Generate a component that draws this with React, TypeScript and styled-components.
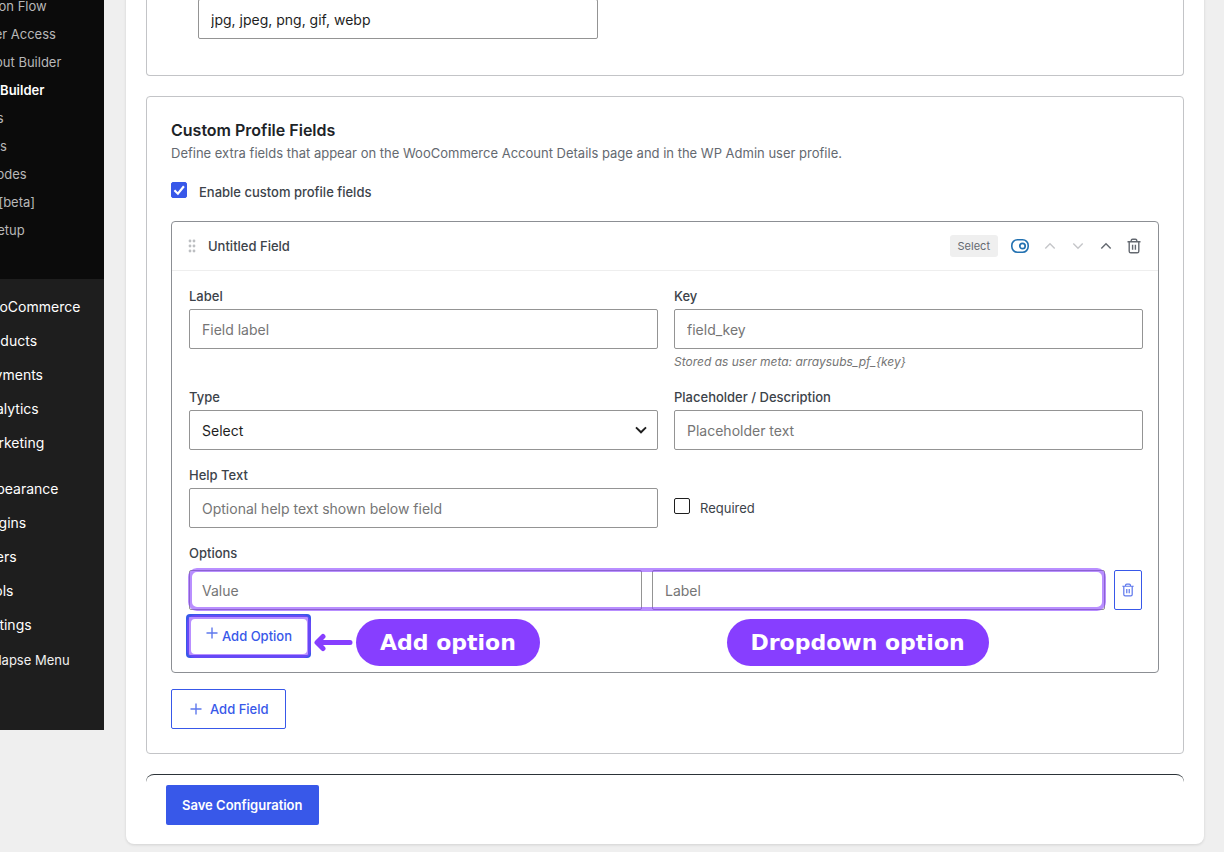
import React, { useState } from "react";
import styled, { createGlobalStyle } from "styled-components";

const BLUE = "#3858e9";
const PURPLE = "#873eff";

const Global = createGlobalStyle`
  *, *::before, *::after { box-sizing: border-box; }
  body {
    margin: 0;
    background: #efefef;
    color: #3c434a;
    font: 400 13px/20px Inter, "Liberation Sans", sans-serif;
    overflow: hidden;
  }
  button, input, select { font-family: inherit; }
`;

const Page = styled.div`
  display: flex;
  align-items: flex-start;
  margin-top: -8px;
`;

const Sidebar = styled.nav`
  flex: none;
  width: 160px;
  margin-left: -56px;
  padding-bottom: 53px;
  background: #1e1e1e;
  overflow: hidden;
`;

const MenuList = styled.ul<{ $sub?: boolean }>`
  list-style: none;
  margin: 0;
  padding: ${(p) => (p.$sub ? "0 0 35px" : "11px 0 1px")};
  background: ${(p) => (p.$sub ? "#0b0b0b" : "transparent")};
`;

const SubLink = styled.a<{ $current?: boolean }>`
  display: block;
  padding-left: 12px;
  font-size: 13px;
  line-height: 28px;
  font-weight: ${(p) => (p.$current ? 600 : 400)};
  color: ${(p) => (p.$current ? "#fff" : "#b8b8b8")};
  text-decoration: none;
  white-space: nowrap;
`;

const MenuLink = styled.a<{ $small?: boolean }>`
  display: block;
  padding-left: 34px;
  font-size: ${(p) => (p.$small ? 13 : 14)}px;
  line-height: 34px;
  font-weight: 400;
  color: ${(p) => (p.$small ? "#f0f0f0" : "#fff")};
  text-decoration: none;
  white-space: nowrap;
`;

const Main = styled.main`
  flex: 1;
  min-width: 0;
  margin: 0 20px 20px 22px;
  padding: 0 20px 19px;
  background: #fff;
  border-radius: 0 0 8px 8px;
  box-shadow: 0 1px 3px rgba(0, 0, 0, 0.12);
`;

const Panel = styled.section<{ $continued?: boolean }>`
  margin-bottom: 20px;
  padding: ${(p) => (p.$continued ? "7px 51px 36px" : "23px 24px 24px")};
  border: 1px solid #c3c4c7;
  border-top-width: ${(p) => (p.$continued ? 0 : 1)}px;
  border-radius: ${(p) => (p.$continued ? "0 0 4px 4px" : "4px")};
`;

const Title = styled.h2`
  margin: 0;
  font-size: 16px;
  line-height: 20px;
  font-weight: 600;
  color: #1d2327;
`;

const Description = styled.p`
  margin: 3px 0 19px;
  color: #646970;
`;

const CheckLabel = styled.label<{ $inGrid?: boolean }>`
  display: flex;
  align-items: flex-start;
  gap: ${(p) => (p.$inGrid ? 10 : 12)}px;
  padding-top: ${(p) => (p.$inGrid ? 32 : 0)}px;
  font-weight: ${(p) => (p.$inGrid ? 400 : 500)};
`;

const CheckBox = styled.span`
  display: grid;
  width: 16px;
  height: 16px;
  & > * { grid-area: 1 / 1; }
  & > svg { pointer-events: none; }
`;

const CheckInput = styled.input`
  appearance: none;
  width: 16px;
  height: 16px;
  margin: 0;
  border: 1px solid #1e1e1e;
  border-radius: 2px;
  background: #fff;
  &:checked { background: ${BLUE}; border-color: ${BLUE}; }
`;

const FieldCard = styled.article`
  margin: 19px 0 16px;
  border: 1px solid #8c8f94;
  border-radius: 4px;
`;

const FieldHeader = styled.header`
  display: flex;
  align-items: center;
  height: 49px;
  padding: 0 10px 0 16px;
  border-bottom: 1px solid #eee;
`;

const FieldName = styled.span`
  flex: 1;
  margin-left: 12px;
  font-weight: 500;
`;

const TypeBadge = styled.span`
  margin-right: 8px;
  padding: 0 8px;
  border-radius: 3px;
  background: #efefef;
  color: #646970;
  font-size: 11px;
  line-height: 22px;
`;

const IconButton = styled.button`
  display: grid;
  place-items: center;
  width: 28px;
  height: 28px;
  padding: 0;
  border: 0;
  background: none;
  color: #646970;
  &:disabled { color: #c5c6c9; }
`;

const ToggleButton = styled(IconButton)`
  margin-right: 2px;
`;

const FieldBody = styled.div`
  display: grid;
  grid-template-columns: 1fr 1fr;
  gap: 16px;
  padding: 16px 15px 16px 17px;
`;

const Field = styled.div`
  min-width: 0;
`;

const Label = styled.label`
  display: block;
  margin-bottom: 4px;
  font-weight: 500;
  line-height: 18px;
`;

const TextInput = styled.input<{ $limited?: boolean }>`
  display: block;
  width: 100%;
  max-width: ${(p) => (p.$limited ? "400px" : "none")};
  height: 40px;
  padding: 0 12px;
  border: 1px solid #949494;
  border-radius: 2px;
  background: #fff;
  color: #1e1e1e;
  font-size: 14px;
  &::placeholder { color: #757575; opacity: 1; }
`;

const SelectWrap = styled.div`
  display: grid;
  align-items: center;
  & > * { grid-area: 1 / 1; }
  & > svg { justify-self: end; margin-right: 11px; pointer-events: none; }
`;

const SelectInput = styled.select`
  appearance: none;
  width: 100%;
  height: 40px;
  padding: 0 32px 0 12px;
  border: 1px solid #949494;
  border-radius: 2px;
  background: #fff;
  color: #1e1e1e;
  font-size: 14px;
`;

const Hint = styled.p`
  margin: 4px 0 1px;
  color: #757575;
  font-size: 12px;
  line-height: 18px;
  font-style: italic;
`;

const Options = styled.fieldset`
  grid-column: 1 / -1;
  min-width: 0;
  margin: 0;
  padding: 0;
  border: 0;
`;

const OptionsLegend = styled.legend`
  padding: 0;
  margin-bottom: 8px;
  font-weight: 500;
  line-height: 18px;
`;

const OptionRow = styled.div`
  display: grid;
  grid-template-columns: 1fr 28px;
  gap: 9px;
  padding-right: 1px;
`;

const OptionInputs = styled.div`
  position: relative;
  display: grid;
  grid-template-columns: 1fr 1fr;
  gap: 10px;
`;

const Highlight = styled.span`
  position: absolute;
  inset: -2px -1px -1px;
  border: 4px solid rgba(135, 62, 255, 0.58);
  border-radius: 9px;
  pointer-events: none;
`;

const ButtonHighlight = styled(Highlight)`
  inset: -2px -3px -3px -2px;
  border-radius: 8px;
`;

const OutlineButton = styled.button<{ $narrow?: boolean }>`
  display: flex;
  align-items: center;
  justify-content: center;
  gap: 6px;
  height: 40px;
  padding: 0 ${(p) => (p.$narrow ? 0 : 16)}px;
  border: 1px solid ${BLUE};
  border-radius: 2px;
  background: #fff;
  color: ${BLUE};
  font-size: 13px;
  font-weight: 500;
  line-height: 20px;
  & > svg { opacity: 0.8; }
`;

const AddOptionArea = styled.div`
  position: relative;
  margin: 6px 0 0 -1px;
`;

const AddOptionButton = styled(OutlineButton)`
  position: relative;
  gap: 3px;
  box-shadow: 0 0 0 2px ${BLUE};
  & > svg { align-self: flex-start; margin-top: 9px; }
`;

const Callout = styled.strong<{ $x: string }>`
  position: absolute;
  top: 3px;
  left: ${(p) => p.$x};
  padding: 0 24px;
  border-radius: 24px;
  background: ${PURPLE};
  color: #fff;
  font: 700 22px/47px "DejaVu Sans", sans-serif;
  white-space: nowrap;
`;

const CalloutArrow = styled.svg`
  position: absolute;
  top: 16px;
  left: 126px;
`;

const Footer = styled.footer`
  padding: 10px 20px 0;
  border-top: 1px solid #2c3338;
  border-radius: 8px 8px 0 0;
`;

const SaveButton = styled.button`
  height: 40px;
  padding: 0 16px;
  border: 0;
  border-radius: 2px;
  background: ${BLUE};
  color: #fff;
  font-size: 13px;
  font-weight: 600;
  line-height: 20px;
`;

const Chevron = ({ down = false }: { down?: boolean }) => (
  <svg width="12" height="8" viewBox="0 0 12 8" fill="none" stroke="currentColor" strokeWidth="1.4">
    <path d={down ? "M1.3 1.6 6 6.3l4.7-4.7" : "M1.3 6.4 6 1.7l4.7 4.7"} />
  </svg>
);

const Trash = ({ size = 16 }: { size?: number }) => (
  <svg width={size} height={size} viewBox="0 0 16 16" fill="none" stroke="currentColor" strokeWidth="1.4">
    <path d="M1.5 3.7h13M5.2 3.4V2.6c0-.8.6-1.4 1.4-1.4h2.8c.8 0 1.4.6 1.4 1.4v.8M3.2 3.9v9.3c0 .9.7 1.6 1.6 1.6h6.4c.9 0 1.6-.7 1.6-1.6V3.9M6.6 6.8v5M9.4 6.8v5" />
  </svg>
);

const Plus = ({ size }: { size: number }) => (
  <svg width={size} height={size} viewBox={`0 0 ${size} ${size}`} stroke="currentColor" strokeWidth="1.4">
    <path d={`M${size / 2} ${size / 2 - 5.5}v11M${size / 2 - 5.5} ${size / 2}h11`} />
  </svg>
);

const Grip = () => (
  <svg width="8" height="14" viewBox="0 0 8 14" fill="#bdbfc2">
    {[2, 7, 12].map((y) => (
      <g key={y}>
        <circle cx="2" cy={y} r="1.4" />
        <circle cx="6" cy={y} r="1.4" />
      </g>
    ))}
  </svg>
);

const Toggle = () => (
  <svg width="18" height="14" viewBox="0 0 18 14" fill="none" stroke="#2271b1">
    <rect x="0.8" y="0.8" width="16.4" height="12.4" rx="5.6" strokeWidth="1.6" />
    <circle cx="11.5" cy="7" r="2.7" strokeWidth="1.7" />
  </svg>
);

const submenu = [
  "Retention Flow",
  "Member Access",
  "Checkout Builder",
  "Profile Builder",
  "Reports",
  "Invoices",
  "Shortcodes",
  "Audits [beta]",
  "Easy Setup",
];
const store = ["WooCommerce", "Products", "Payments", "Analytics", "Marketing"];
const admin = ["Appearance", "Plugins", "Users", "Tools", "Settings"];

const Check = ({
  id,
  label,
  initial,
  inGrid,
}: {
  id: string;
  label: string;
  initial: boolean;
  inGrid?: boolean;
}) => {
  const [on, setOn] = useState(initial);
  return (
    <CheckLabel htmlFor={id} $inGrid={inGrid}>
      <CheckBox>
        <CheckInput id={id} type="checkbox" checked={on} onChange={() => setOn(!on)} />
        {on && (
          <svg width="16" height="16" viewBox="0 0 16 16" fill="none" stroke="#fff" strokeWidth="2.2">
            <path d="M3.4 8.3 6.9 11.7 12.9 4.2" />
          </svg>
        )}
      </CheckBox>
      {label}
    </CheckLabel>
  );
};

export default function App() {
  return (
    <>
      <Global />
      <Page>
        <Sidebar aria-label="Admin menu">
          <MenuList $sub>
            {submenu.map((name) => (
              <li key={name}>
                <SubLink href="#" $current={name === "Profile Builder"}>
                  {name}
                </SubLink>
              </li>
            ))}
          </MenuList>
          {[store, admin].map((group) => (
            <MenuList key={group[0]}>
              {group.map((name) => (
                <li key={name}>
                  <MenuLink href="#">{name}</MenuLink>
                </li>
              ))}
            </MenuList>
          ))}
          <MenuLink href="#" $small>
            Collapse Menu
          </MenuLink>
        </Sidebar>

        <Main>
          <Panel $continued>
            <TextInput $limited aria-label="Allowed file types" defaultValue="jpg, jpeg, png, gif, webp" />
          </Panel>

          <Panel>
            <Title>Custom Profile Fields</Title>
            <Description>
              Define extra fields that appear on the WooCommerce Account Details page and in the WP Admin user profile.
            </Description>
            <Check id="enable" label="Enable custom profile fields" initial />

            <FieldCard>
              <FieldHeader>
                <Grip />
                <FieldName>Untitled Field</FieldName>
                <TypeBadge>Select</TypeBadge>
                <ToggleButton aria-label="Toggle field">
                  <Toggle />
                </ToggleButton>
                <IconButton aria-label="Move up" disabled>
                  <Chevron />
                </IconButton>
                <IconButton aria-label="Move down" disabled>
                  <Chevron down />
                </IconButton>
                <IconButton aria-label="Collapse">
                  <Chevron />
                </IconButton>
                <IconButton aria-label="Delete field">
                  <Trash />
                </IconButton>
              </FieldHeader>

              <FieldBody>
                <Field>
                  <Label htmlFor="label">Label</Label>
                  <TextInput id="label" placeholder="Field label" />
                </Field>
                <Field>
                  <Label htmlFor="key">Key</Label>
                  <TextInput id="key" placeholder="field_key" />
                  <Hint>Stored as user meta: arraysubs_pf_{"{key}"}</Hint>
                </Field>
                <Field>
                  <Label htmlFor="type">Type</Label>
                  <SelectWrap>
                    <SelectInput id="type" defaultValue="Select">
                      <option>Select</option>
                    </SelectInput>
                    <svg width="12" height="8" viewBox="0 0 12 8" fill="none" stroke="#1e1e1e" strokeWidth="1.9">
                      <path d="M1 1.4 6 6.3l5-4.9" />
                    </svg>
                  </SelectWrap>
                </Field>
                <Field>
                  <Label htmlFor="placeholder">Placeholder / Description</Label>
                  <TextInput id="placeholder" placeholder="Placeholder text" />
                </Field>
                <Field>
                  <Label htmlFor="help">Help Text</Label>
                  <TextInput id="help" placeholder="Optional help text shown below field" />
                </Field>
                <Check id="required" label="Required" initial={false} inGrid />

                <Options>
                  <OptionsLegend>Options</OptionsLegend>
                  <OptionRow>
                    <OptionInputs>
                      <TextInput aria-label="Option value" placeholder="Value" />
                      <TextInput aria-label="Option label" placeholder="Label" />
                      <Highlight />
                    </OptionInputs>
                    <OutlineButton $narrow aria-label="Delete option">
                      <Trash size={14} />
                    </OutlineButton>
                  </OptionRow>
                  <AddOptionArea>
                    <AddOptionButton>
                      <Plus size={14} />
                      Add Option
                      <ButtonHighlight />
                    </AddOptionButton>
                    <CalloutArrow
                      width="40"
                      height="20"
                      viewBox="0 0 40 20"
                      fill="none"
                      stroke={PURPLE}
                      strokeWidth="5"
                      strokeLinecap="round"
                      strokeLinejoin="round"
                    >
                      <path d="M36 10.5H4M9 4.5l-6 6 6 6" />
                    </CalloutArrow>
                    <Callout $x="168px">Add option</Callout>
                    <Callout $x="calc(50% + 61px)">Dropdown option</Callout>
                  </AddOptionArea>
                </Options>
              </FieldBody>
            </FieldCard>

            <OutlineButton>
              <Plus size={16} />
              Add Field
            </OutlineButton>
          </Panel>

          <Footer>
            <SaveButton>Save Configuration</SaveButton>
          </Footer>
        </Main>
      </Page>
    </>
  );
}
